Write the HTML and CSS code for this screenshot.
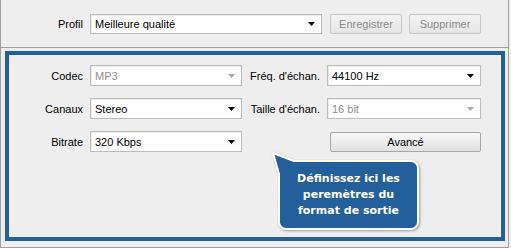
FILE: index.html
```html
<!DOCTYPE html>
<html lang="fr">
<head>
    <meta charset="UTF-8">
    <title>Profil de sortie</title>
    <link rel="stylesheet" href="styles.css">
</head>
<body>
    <div class="window">
        <div class="profile-bar">
            <span class="label">Profil</span>
            <div class="select profile-select">
                <span>Meilleure qualité</span>
                <svg class="arrow" width="7" height="4" viewBox="0 0 7 4"><polygon points="0,0 7,0 3.5,4"/></svg>
            </div>
            <button class="button save" disabled>Enregistrer</button>
            <button class="button" disabled>Supprimer</button>
        </div>

        <div class="format-panel">
            <div class="format-grid">
                <span class="label">Codec</span>
                <div class="select disabled">
                    <span>MP3</span>
                    <svg class="arrow" width="7" height="4" viewBox="0 0 7 4"><polygon points="0,0 7,0 3.5,4"/></svg>
                </div>
                <span class="label">Fréq. d'échan.</span>
                <div class="select">
                    <span>44100 Hz</span>
                    <svg class="arrow" width="7" height="4" viewBox="0 0 7 4"><polygon points="0,0 7,0 3.5,4"/></svg>
                </div>

                <span class="label">Canaux</span>
                <div class="select">
                    <span>Stereo</span>
                    <svg class="arrow" width="7" height="4" viewBox="0 0 7 4"><polygon points="0,0 7,0 3.5,4"/></svg>
                </div>
                <span class="label">Taille d'échan.</span>
                <div class="select disabled">
                    <span>16 bit</span>
                    <svg class="arrow" width="7" height="4" viewBox="0 0 7 4"><polygon points="0,0 7,0 3.5,4"/></svg>
                </div>

                <span class="label">Bitrate</span>
                <div class="select">
                    <span>320 Kbps</span>
                    <svg class="arrow" width="7" height="4" viewBox="0 0 7 4"><polygon points="0,0 7,0 3.5,4"/></svg>
                </div>
                <span></span>
                <button class="button advanced">Avancé</button>
            </div>

            <!-- callout bubble over the panel -->
            <div class="callout">
                <svg class="callout-shape" width="152" height="84" viewBox="0 0 152 84">
                    <path d="M3,3 L24,11 H141 A7,7 0 0 1 148,18 V72 A7,7 0 0 1 141,79 H16 A7,7 0 0 1 9,72 V24 Z"/>
                </svg>
                <div class="callout-text">Définissez ici les<br>peremètres du<br>format de sortie</div>
            </div>
        </div>
    </div>
</body>
</html>
```

FILE: styles.css
```css
body {
    margin: 0;
    background-color: #eeeeee;
    font-family: "Liberation Sans", Arial, sans-serif;
    font-size: 11px;
    color: #000;
}

.window {
    box-sizing: border-box;
    width: 509px;
    height: 248px;
    border: 1px solid #a0a0a0;
    border-top: none;
}

.profile-bar {
    box-sizing: border-box;
    height: 48px;
    display: flex;
    align-items: center;
    padding-left: 8px;
    border-bottom: 1px solid #a0a0a0;
}

.label {
    text-align: right;
    white-space: nowrap;
}

.profile-bar .label {
    width: 74px;
    margin-right: 7px;
}

.select {
    box-sizing: border-box;
    height: 21px;
    display: flex;
    align-items: center;
    justify-content: space-between;
    padding: 0 6px 0 4px;
    background-color: #fff;
    border: 1px solid #bcbcbc;
    box-shadow: inset 1px 1px 0 #ececec;
}

.select .arrow {
    fill: #000;
}

.select.disabled {
    color: #8e8e8e;
}

.select.disabled .arrow {
    fill: #a8a8a8;
}

.profile-select {
    width: 232px;
    height: 20px;
    margin-right: 8px;
}

.button {
    box-sizing: border-box;
    width: 72px;
    height: 20px;
    margin-top: 1px;
    padding: 0;
    font-family: inherit;
    font-size: 11px;
    color: #8a8a8a;
    background: linear-gradient(#f3f3f3, #e5e5e5);
    border: 1px solid #c6c6c6;
    border-radius: 2px;
}

.button.save {
    margin-right: 7px;
}

.format-panel {
    position: relative;
    box-sizing: border-box;
    width: 500px;
    height: 190px;
    margin: 3px 0 0 4px;
    padding-top: 10px;
    border: 4px solid #23609b;
}

.format-grid {
    display: grid;
    grid-template-columns: 74px 152px 71px 154px;
    grid-template-rows: 21px 21px 21px;
    column-gap: 7px;
    row-gap: 12px;
    align-items: center;
}

.button.advanced {
    width: 151px;
    margin: 1px 0 0 3px;
    color: #000;
    background: linear-gradient(#f8f8f8, #e1e1e1);
    border-color: #a8a8a8;
}

.callout {
    position: absolute;
    left: 261px;
    top: 95px;
    width: 152px;
    height: 84px;
}

.callout-shape {
    display: block;
    filter: drop-shadow(1px 1px 1px rgba(0, 0, 0, 0.35));
}

.callout-shape path {
    fill: #23609b;
    stroke: #fff;
    stroke-width: 2;
    stroke-linejoin: round;
}

.callout-text {
    position: absolute;
    left: 9px;
    top: 11px;
    width: 139px;
    height: 68px;
    display: flex;
    align-items: center;
    justify-content: center;
    text-align: center;
    font-family: "DejaVu Sans", Verdana, sans-serif;
    font-size: 11px;
    font-weight: bold;
    line-height: 16px;
    color: #fff;
}
```
